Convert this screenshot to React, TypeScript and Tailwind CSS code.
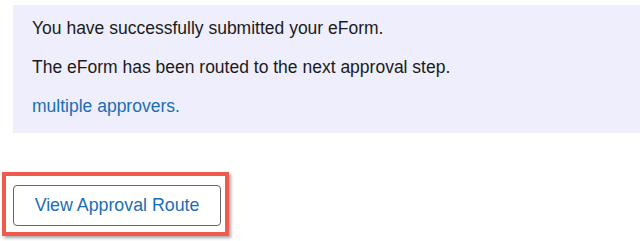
export default function App() {
  return (
    <div className="min-h-screen bg-white font-['Liberation_Sans',Arial,sans-serif]">
      <div className="pt-[5px] pl-[13px]">
        <div className="bg-[#eeeefc] pl-[19px] pt-[11px] pb-[15px] text-[17.5px] leading-[24px] text-[#1b1b1b]">
          <p className="mb-[15px]">You have successfully submitted your eForm.</p>
          <p className="mb-[15px]">The eForm has been routed to the next approval step.</p>
          <p className="text-[#1a6db5]">multiple approvers.</p>
        </div>
      </div>
      <div className="pt-[39px] pl-[2px]">
        <div className="inline-block border-4 border-[#ee5a4b] pl-[7px] pr-[4px] pt-[9px] pb-[6px] shadow-[2px_2px_3px_rgba(0,0,0,0.35)]">
          <button className="block w-[208px] h-[41px] rounded-[4px] border border-[#666] bg-white text-[17.8px] text-[#1a6db5]">
            View Approval Route
          </button>
        </div>
      </div>
    </div>
  );
}
